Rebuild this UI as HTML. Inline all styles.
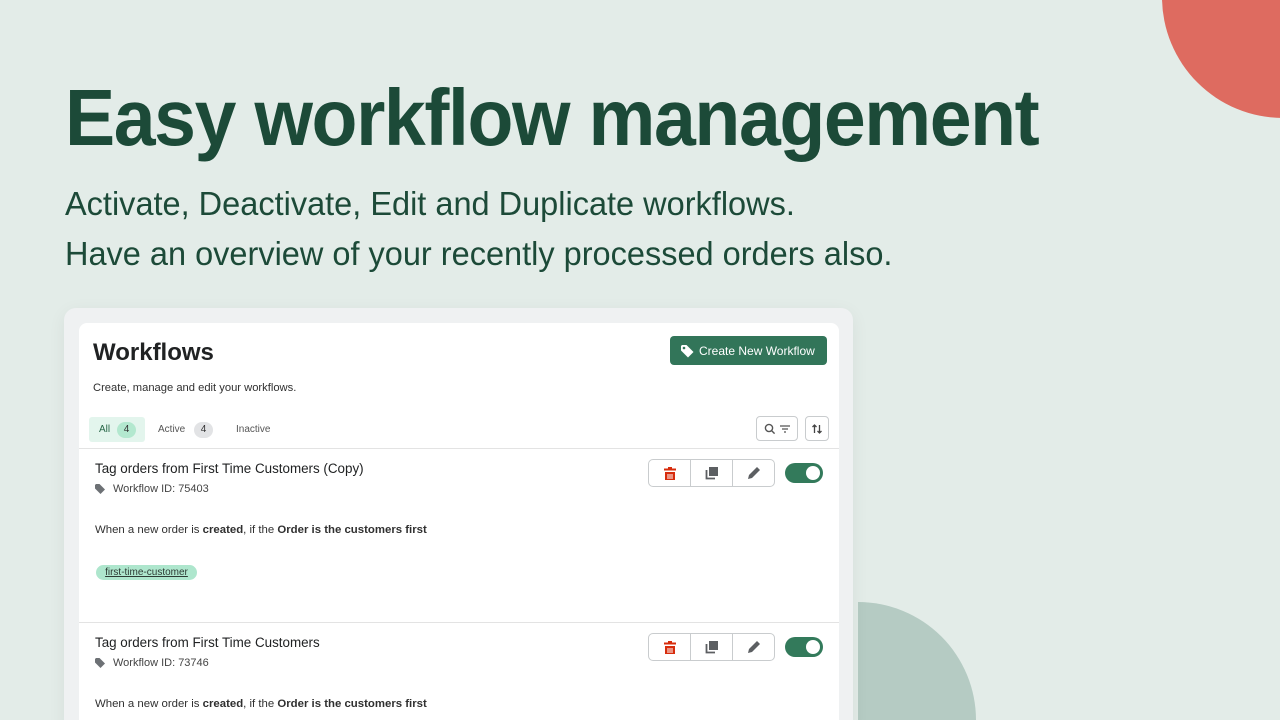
<!DOCTYPE html>
<html><head><meta charset="utf-8"><style>
*{margin:0;padding:0;box-sizing:border-box}
html,body{width:1280px;height:720px;overflow:hidden}
body{background:#e3ece8;position:relative;font-family:"Liberation Sans",sans-serif}
.a{position:absolute}
h1{position:absolute;left:65px;top:72px;font-size:80px;font-weight:bold;color:#1c4a38;letter-spacing:-1.5px;white-space:nowrap;transform:scaleX(0.94);transform-origin:left}
.sub{position:absolute;left:65px;font-size:33px;color:#1c4a38;white-space:nowrap;letter-spacing:0;transform:scaleX(0.985);transform-origin:left}
.t{color:#222;white-space:nowrap}
.btns{position:absolute;width:127px;height:28px;border:1px solid #c9ccce;border-radius:5px;background:#fff;display:flex}
.btns div{flex:1;border-right:1px solid #c9ccce;display:flex;align-items:center;justify-content:center}
.btns div:last-child{border-right:0}
.tog{position:absolute;width:38px;height:20px;border-radius:10px;background:#337a5b}
.tog:after{content:"";position:absolute;right:3px;top:3px;width:14px;height:14px;border-radius:50%;background:#fff}
</style></head><body>
<div class="a" style="left:1162px;top:-124px;width:242px;height:242px;border-radius:50%;background:#de6b60"></div>
<div class="a" style="left:858px;top:602px;width:118px;height:118px;border-top-right-radius:118px;background:#b5cbc3"></div>
<h1>Easy workflow management</h1>
<div class="sub" style="top:185px">Activate, Deactivate, Edit and Duplicate workflows.</div>
<div class="sub" style="top:235px">Have an overview of your recently processed orders also.</div>

<div class="a" style="left:64px;top:308px;width:789px;height:430px;background:#eff1f2;border-radius:12px;box-shadow:0 4px 18px rgba(0,0,0,.06)"></div>
<div class="a" style="left:79px;top:323px;width:760px;height:420px;background:#fff;border-radius:8px"></div>

<div class="a t" style="left:93px;top:339px;font-size:24px;font-weight:bold;color:#202223">Workflows</div>
<div class="a" style="left:670px;top:336px;width:157px;height:29px;background:#327559;border-radius:4px;color:#fff;font-size:12px;display:flex;align-items:center;padding-left:10px">
<svg width="15" height="14" viewBox="0 0 15 14"><path d="M1 2v4.5l7 7 5.5-5.5-7-7H2z" fill="#fff"/><circle cx="4" cy="4" r="1.3" fill="#327559"/></svg><span style="margin-left:4px">Create New Workflow</span></div>
<div class="a t" style="left:93px;top:382px;font-size:11.2px;color:#303030">Create, manage and edit your workflows.</div>

<div class="a" style="left:89px;top:417px;width:56px;height:25px;background:#e3f5ed;border-radius:3px"></div>
<div class="a t" style="left:99px;top:424px;font-size:10px;color:#276647">All</div>
<div class="a" style="left:117px;top:422px;width:19px;height:16px;border-radius:8px;background:#b3e8cf;font-size:10px;text-align:center;line-height:16px;color:#333">4</div>
<div class="a t" style="left:158px;top:424px;font-size:10px;color:#555">Active</div>
<div class="a" style="left:194px;top:422px;width:19px;height:16px;border-radius:8px;background:#e2e3e5;font-size:10px;text-align:center;line-height:16px;color:#333">4</div>
<div class="a t" style="left:236px;top:424px;font-size:10px;color:#555">Inactive</div>
<div class="a" style="left:756px;top:416px;width:42px;height:25px;border:1px solid #c9ccce;border-radius:4px;display:flex;align-items:center;justify-content:center;gap:3px">
<svg width="12" height="12" viewBox="0 0 12 12"><circle cx="5" cy="5" r="3.6" fill="none" stroke="#555" stroke-width="1.4"/><path d="M7.6 7.6l3 3" stroke="#555" stroke-width="1.4"/></svg>
<svg width="12" height="10" viewBox="0 0 12 10"><path d="M1 2h10M3 5h6M5 8h2" stroke="#555" stroke-width="1.3"/></svg></div>
<div class="a" style="left:805px;top:416px;width:24px;height:25px;border:1px solid #c9ccce;border-radius:4px;display:flex;align-items:center;justify-content:center">
<svg width="12" height="12" viewBox="0 0 12 12"><path d="M3.5 10V2M1.5 4l2-2 2 2M8.5 2v8M6.5 8l2 2 2-2" stroke="#444" stroke-width="1.3" fill="none"/></svg></div>
<div class="a" style="left:79px;top:448px;width:760px;height:1px;background:#e3e3e3"></div>

<div class="a t" style="left:95px;top:461px;font-size:13.4px;color:#202223">Tag orders from First Time Customers (Copy)</div>
<svg class="a" style="left:95px;top:484px" width="11" height="10" viewBox="0 0 11 10"><path d="M0 1v3.5l5.5 5.5 4.5-4.5-5.5-5.5H1z" fill="#6d7175"/></svg>
<div class="a t" style="left:113px;top:483px;font-size:11px;color:#444">Workflow ID: 75403</div>
<div class="a t" style="left:95px;top:524px;font-size:11.4px;color:#303030">When a new order is <b>created</b>, if the <b>Order is the customers first</b></div>
<div class="a" style="left:96px;top:565px;width:101px;height:15px;border-radius:8px;background:#aee6cd;font-size:10px;color:#2d3b34;text-decoration:underline;text-align:center;line-height:15px">first-time-customer</div>
<div class="btns" style="left:648px;top:459px"><div><svg width="14" height="15" viewBox="0 0 14 15"><path d="M5 1h4v1.5h4v2H1v-2h4z M2 6h10v8H2z" fill="#d72c0d"/><path d="M5 8v5M7 8v5M9 8v5" stroke="#fff" stroke-width="1"/></svg></div><div><svg width="14" height="14" viewBox="0 0 14 14"><rect x="4" y="1" width="9" height="9" fill="#5c5f62"/><path d="M1.5 4v8.5H10" stroke="#5c5f62" stroke-width="1.8" fill="none"/></svg></div><div><svg width="16" height="16" viewBox="0 0 16 16"><path d="M2 14l1-4 8-8 3 3-8 8z" fill="#5c5f62"/></svg></div></div>
<div class="tog" style="left:785px;top:463px"></div>
<div class="a" style="left:79px;top:622px;width:760px;height:1px;background:#e3e3e3"></div>

<div class="a t" style="left:95px;top:635px;font-size:13.4px;color:#202223">Tag orders from First Time Customers</div>
<svg class="a" style="left:95px;top:658px" width="11" height="10" viewBox="0 0 11 10"><path d="M0 1v3.5l5.5 5.5 4.5-4.5-5.5-5.5H1z" fill="#6d7175"/></svg>
<div class="a t" style="left:113px;top:657px;font-size:11px;color:#444">Workflow ID: 73746</div>
<div class="a t" style="left:95px;top:698px;font-size:11.4px;color:#303030">When a new order is <b>created</b>, if the <b>Order is the customers first</b></div>
<div class="btns" style="left:648px;top:633px"><div><svg width="14" height="15" viewBox="0 0 14 15"><path d="M5 1h4v1.5h4v2H1v-2h4z M2 6h10v8H2z" fill="#d72c0d"/><path d="M5 8v5M7 8v5M9 8v5" stroke="#fff" stroke-width="1"/></svg></div><div><svg width="14" height="14" viewBox="0 0 14 14"><rect x="4" y="1" width="9" height="9" fill="#5c5f62"/><path d="M1.5 4v8.5H10" stroke="#5c5f62" stroke-width="1.8" fill="none"/></svg></div><div><svg width="16" height="16" viewBox="0 0 16 16"><path d="M2 14l1-4 8-8 3 3-8 8z" fill="#5c5f62"/></svg></div></div>
<div class="tog" style="left:785px;top:637px"></div>
</body></html>
